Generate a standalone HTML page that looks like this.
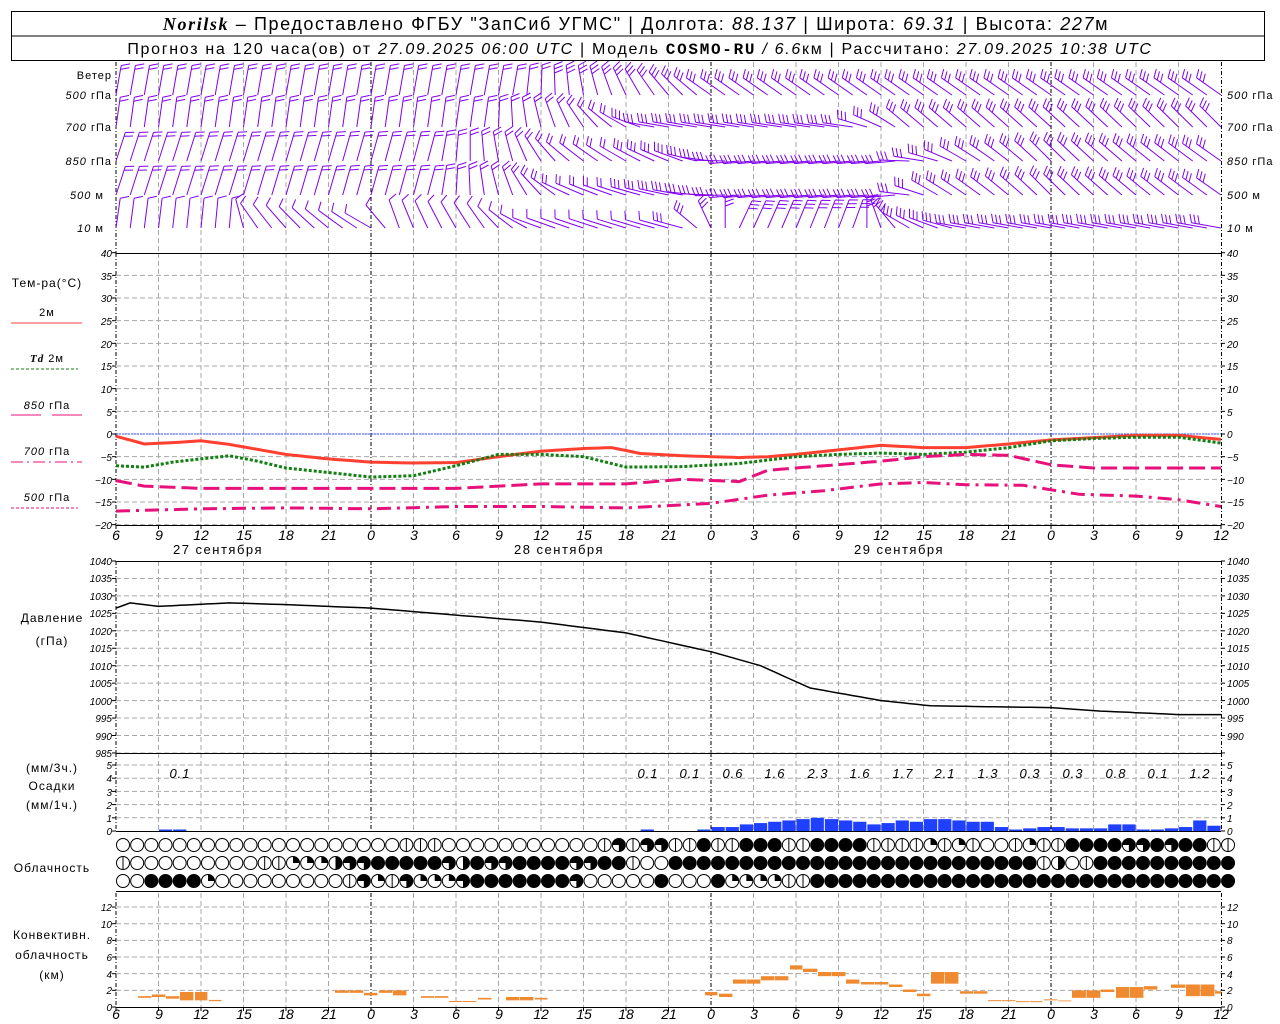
<!DOCTYPE html>
<html><head><meta charset="utf-8">
<style>
html,body{margin:0;padding:0;background:#fff;}
svg{display:block;}
text{font-family:"Liberation Sans",sans-serif;fill:#000;}
.t{font-size:10px;font-style:italic;}
.ax{font-size:14px;font-style:italic;}
.lb{font-size:12px;letter-spacing:1px;}
</style></head><body>
<svg id="s" width="1280" height="1024" viewBox="0 0 1280 1024" xmlns="http://www.w3.org/2000/svg">
<rect x="0" y="0" width="1280" height="1024" fill="#fff"/>
<g id="g"></g>
<!-- header -->
<rect x="11.5" y="11.5" width="1253" height="49" fill="none" stroke="#000"/>
<line x1="11" y1="36" x2="1265" y2="36" stroke="#000"/>
<text x="636" y="30" text-anchor="middle" style="font-size:18px;letter-spacing:1.6px">
<tspan style="font-family:'Liberation Serif',serif;font-style:italic;font-weight:bold">Norilsk</tspan> – Предоставлено ФГБУ "ЗапСиб УГМС" | Долгота: <tspan font-style="italic">88.137</tspan> | Широта: <tspan font-style="italic">69.31</tspan> | Высота: <tspan font-style="italic">227</tspan>м</text>
<text x="640" y="54" text-anchor="middle" style="font-size:16px;letter-spacing:1.7px">Прогноз на 120 часа(ов) от <tspan font-style="italic">27.09.2025 06:00 UTC</tspan>  | Модель <tspan style="font-family:'Liberation Mono',monospace;font-weight:bold">COSMO-RU</tspan> <tspan font-style="italic">/ 6.6</tspan>км | Рассчитано: <tspan font-style="italic">27.09.2025 10:38 UTC</tspan></text>

<!-- wind labels -->
<g class="lb" text-anchor="end" style="font-size:11px">
<text x="112" y="79">Ветер</text>
<text x="112" y="99"><tspan font-style="italic">500</tspan> гПа</text>
<text x="112" y="131"><tspan font-style="italic">700</tspan> гПа</text>
<text x="112" y="165"><tspan font-style="italic">850</tspan> гПа</text>
<text x="104" y="199"><tspan font-style="italic">500</tspan> м</text>
<text x="104" y="232"><tspan font-style="italic">10</tspan>  м</text>
</g>
<g style="font-size:11px;letter-spacing:1px">
<text x="1227" y="99"><tspan font-style="italic">500</tspan> гПа</text>
<text x="1227" y="131"><tspan font-style="italic">700</tspan> гПа</text>
<text x="1227" y="165"><tspan font-style="italic">850</tspan> гПа</text>
<text x="1227" y="199"><tspan font-style="italic">500</tspan> м</text>
<text x="1227" y="232"><tspan font-style="italic">10</tspan>   м</text>
</g>

<!-- temp legend -->
<g class="lb" text-anchor="middle">
<text x="47" y="287">Тем-ра(°C)</text>
<text x="47" y="316" style="font-size:11px">2м</text>
<text x="47" y="362" style="font-size:11px"><tspan style="font-family:'Liberation Serif',serif;font-style:italic;font-weight:bold">Td</tspan>  2м</text>
<text x="47" y="409" style="font-size:11px"><tspan font-style="italic">850</tspan> гПа</text>
<text x="47" y="455" style="font-size:11px"><tspan font-style="italic">700</tspan> гПа</text>
<text x="47" y="501" style="font-size:11px"><tspan font-style="italic">500</tspan> гПа</text>
<text x="52" y="622">Давление</text>
<text x="52" y="645">(гПа)</text>
<text x="52" y="772">(мм/3ч.)</text>
<text x="52" y="790">Осадки</text>
<text x="52" y="809">(мм/1ч.)</text>
<text x="52" y="872">Облачность</text>
<text x="52" y="939">Конвективн.</text>
<text x="52" y="959">облачность</text>
<text x="52" y="979">(км)</text>
</g>
<line x1="11" y1="323" x2="82" y2="323" stroke="#ff4040"/>
<line x1="11" y1="369" x2="78" y2="369" stroke="#108010" stroke-dasharray="3,2"/>
<line x1="11" y1="415" x2="41" y2="415" stroke="#e8107a"/><line x1="52" y1="415" x2="82" y2="415" stroke="#e8107a"/>
<line x1="11" y1="462" x2="82" y2="462" stroke="#e8107a" stroke-dasharray="12,4,2,4"/>
<line x1="11" y1="508" x2="78" y2="508" stroke="#e8107a" stroke-dasharray="3,2"/>

<!-- temp axis labels -->
<g class="t" text-anchor="end">
<text x="112" y="257">40</text><text x="112" y="280">35</text><text x="112" y="302">30</text><text x="112" y="325">25</text><text x="112" y="348">20</text><text x="112" y="370">15</text><text x="112" y="393">10</text><text x="112" y="416">5</text><text x="112" y="438">0</text><text x="112" y="461">−5</text><text x="112" y="484">−10</text><text x="112" y="506">−15</text><text x="112" y="529">−20</text>
</g>
<g class="t">
<text x="1227" y="257">40</text><text x="1227" y="280">35</text><text x="1227" y="302">30</text><text x="1227" y="325">25</text><text x="1227" y="348">20</text><text x="1227" y="370">15</text><text x="1227" y="393">10</text><text x="1227" y="416">5</text><text x="1227" y="438">0</text><text x="1227" y="461">−5</text><text x="1227" y="484">−10</text><text x="1227" y="506">−15</text><text x="1227" y="529">−20</text>
</g>
<!-- pressure labels -->
<g class="t" text-anchor="end">
<text x="112" y="565">1040</text><text x="112" y="582">1035</text><text x="112" y="600">1030</text><text x="112" y="617">1025</text><text x="112" y="635">1020</text><text x="112" y="652">1015</text><text x="112" y="670">1010</text><text x="112" y="687">1005</text><text x="112" y="705">1000</text><text x="112" y="722">995</text><text x="112" y="740">990</text><text x="112" y="757">985</text>
</g>
<g class="t">
<text x="1227" y="565">1040</text><text x="1227" y="582">1035</text><text x="1227" y="600">1030</text><text x="1227" y="617">1025</text><text x="1227" y="635">1020</text><text x="1227" y="652">1015</text><text x="1227" y="670">1010</text><text x="1227" y="687">1005</text><text x="1227" y="705">1000</text><text x="1227" y="722">995</text><text x="1227" y="740">990</text>
</g>
<!-- precip labels -->
<g class="t" text-anchor="end">
<text x="112" y="769">5</text><text x="112" y="782">4</text><text x="112" y="796">3</text><text x="112" y="809">2</text><text x="112" y="822">1</text><text x="112" y="835">0</text>
</g>
<g class="t">
<text x="1227" y="769">5</text><text x="1227" y="782">4</text><text x="1227" y="796">3</text><text x="1227" y="809">2</text><text x="1227" y="822">1</text><text x="1227" y="835">0</text>
</g>
<g style="font-size:13px;font-style:italic;letter-spacing:1px" text-anchor="middle">
<text x="180" y="778">0.1</text><text x="648" y="778">0.1</text><text x="690" y="778">0.1</text><text x="733" y="778">0.6</text><text x="775" y="778">1.6</text><text x="818" y="778">2.3</text><text x="860" y="778">1.6</text><text x="903" y="778">1.7</text><text x="945" y="778">2.1</text><text x="988" y="778">1.3</text><text x="1030" y="778">0.3</text><text x="1073" y="778">0.3</text><text x="1116" y="778">0.8</text><text x="1158" y="778">0.1</text><text x="1200" y="778">1.2</text>
</g>
<!-- convective labels -->
<g class="t" text-anchor="end">
<text x="112" y="911">12</text><text x="112" y="928">10</text><text x="112" y="944">8</text><text x="112" y="961">6</text><text x="112" y="978">4</text><text x="112" y="994">2</text><text x="112" y="1011">0</text>
</g>
<g class="t">
<text x="1227" y="911">12</text><text x="1227" y="928">10</text><text x="1227" y="944">8</text><text x="1227" y="961">6</text><text x="1227" y="978">4</text><text x="1227" y="994">2</text><text x="1227" y="1011">0</text>
</g>
<!-- time axes -->
<g class="ax" text-anchor="middle">
<text x="116" y="540">6</text><text x="159" y="540">9</text><text x="201" y="540">12</text><text x="244" y="540">15</text><text x="286" y="540">18</text><text x="329" y="540">21</text><text x="371" y="540">0</text><text x="414" y="540">3</text><text x="456" y="540">6</text><text x="499" y="540">9</text><text x="541" y="540">12</text><text x="584" y="540">15</text><text x="626" y="540">18</text><text x="669" y="540">21</text><text x="711" y="540">0</text><text x="754" y="540">3</text><text x="796" y="540">6</text><text x="839" y="540">9</text><text x="881" y="540">12</text><text x="924" y="540">15</text><text x="966" y="540">18</text><text x="1009" y="540">21</text><text x="1051" y="540">0</text><text x="1094" y="540">3</text><text x="1136" y="540">6</text><text x="1179" y="540">9</text><text x="1221" y="540">12</text>
</g>
<g class="ax" text-anchor="middle">
<text x="116" y="1019">6</text><text x="159" y="1019">9</text><text x="201" y="1019">12</text><text x="244" y="1019">15</text><text x="286" y="1019">18</text><text x="329" y="1019">21</text><text x="371" y="1019">0</text><text x="414" y="1019">3</text><text x="456" y="1019">6</text><text x="499" y="1019">9</text><text x="541" y="1019">12</text><text x="584" y="1019">15</text><text x="626" y="1019">18</text><text x="669" y="1019">21</text><text x="711" y="1019">0</text><text x="754" y="1019">3</text><text x="796" y="1019">6</text><text x="839" y="1019">9</text><text x="881" y="1019">12</text><text x="924" y="1019">15</text><text x="966" y="1019">18</text><text x="1009" y="1019">21</text><text x="1051" y="1019">0</text><text x="1094" y="1019">3</text><text x="1136" y="1019">6</text><text x="1179" y="1019">9</text><text x="1221" y="1019">12</text>
</g>
<g style="font-size:13px;letter-spacing:1.5px" text-anchor="middle">
<text x="218" y="554">27 сентября</text><text x="559" y="554">28 сентября</text><text x="899" y="554">29 сентября</text>
</g>
</svg>
<script>
(function(){
var NS="http://www.w3.org/2000/svg",G=document.getElementById("g");
function el(n,a){var e=document.createElementNS(NS,n);for(var k in a)e.setAttribute(k,a[k]);G.appendChild(e);return e;}
function X(h){return 116+h*14.167;}
function L(x1,y1,x2,y2,c,w,d){var a={x1:x1,y1:y1,x2:x2,y2:y2,stroke:c,"stroke-width":w||1};if(d)a["stroke-dasharray"]=d;return el("line",a);}
var GR="#a8a8a8",DA="5,3";
function vgrid(y1,y2){for(var h=3;h<78;h+=3){if(h==18||h==42||h==66)L(X(h),y1,X(h),y2,"#000",1,"4,2,1,2");else L(X(h),y1,X(h),y2,GR,1,DA);}
 L(116,y1,116,y2,"#000",1,"4,2,1,2");L(1221.5,y1,1221.5,y2,"#000",1,"4,2,1,2");}
vgrid(62,253);vgrid(253,525);vgrid(561,753);vgrid(753,831);vgrid(893,1007);
for(var t=35;t>=-20;t-=5){var y=434-t*4.533;L(116,y,1221,y,GR,1,DA);}
for(var p=1035;p>=985;p-=5){var y=561+(1040-p)*3.49;L(116,y,1221,y,GR,1,DA);}
for(var v=1;v<=5;v++){var y=831-v*13.2;L(116,y,1221,y,GR,1,DA);}
for(var k=2;k<=12;k+=2){var y=1007-k*8.33;L(116,y,1221,y,GR,1,DA);}
function ticks(ys){ys.forEach(function(y){L(112,y,116,y,"#000");L(1221,y,1225,y,"#000");});}
var a=[];for(var t=40;t>=-20;t-=5)a.push(434-t*4.533);ticks(a);
a=[];for(var p=1040;p>=985;p-=5)a.push(561+(1040-p)*3.49);ticks(a);
a=[];for(var v=0;v<=5;v++)a.push(831-v*13.2);ticks(a);
a=[];for(var k=0;k<=12;k+=2)a.push(1007-k*8.33);ticks(a);
for(var h=0;h<=78;h+=3){L(X(h),525,X(h),529,"#000");L(X(h),1007,X(h),1011,"#000");}
L(116,253.5,1221,253.5,"#000");L(116,525.5,1221,525.5,"#000");
L(116,561.5,1221,561.5,"#000");L(116,753.5,1221,753.5,"#000");
L(116,831.5,1221,831.5,"#000");L(116,891.5,1221,891.5,"#000");L(116,1007.5,1221,1007.5,"#000");
L(116,434,1221,434,"#3050ff",1,"2,1");
function interp(pts,h){for(var i=0;i<pts.length-1;i++){if(h>=pts[i][0]&&h<=pts[i+1][0]){var f=(h-pts[i][0])/(pts[i+1][0]-pts[i][0]);return pts[i][1]+f*(pts[i+1][1]-pts[i][1]);}}return pts[pts.length-1][1];}
function series(pts,fy,c,w,d){var s="";for(var h=0;h<=78;h+=0.5){s+=X(h).toFixed(1)+","+fy(interp(pts,h)).toFixed(1)+" ";}var o={points:s,fill:"none",stroke:c,"stroke-width":w};if(d)o["stroke-dasharray"]=d;el("polyline",o);}
var TY=function(t){return 434-t*4.533;};
series([[0,-0.5],[2,-2.2],[4,-1.9],[6,-1.5],[8,-2.3],[12,-4.5],[15,-5.5],[18,-6.2],[21,-6.4],[24,-6.3],[27,-5],[30,-3.8],[33,-3.2],[35,-3],[37,-4.3],[40,-4.8],[44,-5.2],[46,-5],[48,-4.5],[51,-3.5],[54,-2.5],[57,-3],[60,-3],[63,-2.2],[66,-1.3],[69,-0.8],[72,-0.3],[75,-0.3],[78,-1.2]],TY,"#ff4030",3);
series([[0,-7],[2,-7.3],[4,-6.2],[6,-5.5],[8,-4.8],[10,-6],[12,-7.5],[15,-8.5],[18,-9.5],[21,-9.2],[24,-7],[27,-4.5],[30,-4.5],[33,-5],[36,-7.3],[40,-7.2],[44,-6.5],[48,-5],[51,-4.5],[54,-4.2],[57,-4.5],[60,-4],[63,-3],[66,-1.5],[69,-1],[72,-0.7],[75,-0.7],[78,-2]],TY,"#108010",3,"3,2");
series([[0,-10.3],[2,-11.5],[6,-12],[12,-12],[24,-12],[30,-11],[36,-11],[40,-10],[44,-10.5],[46,-8],[50,-7],[54,-6],[57,-5],[60,-4.5],[63,-4.7],[66,-6.8],[69,-7.5],[72,-7.5],[75,-7.5],[78,-7.5]],TY,"#e8107a",3,"16,6");
series([[0,-17],[6,-16.5],[12,-16.3],[18,-16.5],[24,-16],[30,-16],[36,-16.3],[42,-15.3],[46,-13.5],[50,-12.5],[54,-11],[57,-10.7],[60,-11.2],[64,-11.3],[68,-13.3],[72,-13.7],[75,-14.5],[78,-16]],TY,"#e8107a",3,"14,6,3,6");
var PY=function(p){return 561+(1040-p)*3.49;};
series([[0,1026.5],[1,1028],[3,1027],[8,1028],[12,1027.5],[18,1026.5],[24,1024.5],[30,1022.5],[36,1019.4],[42,1014],[45.5,1010],[49,1003.6],[54,1000],[57.5,998.5],[66,998],[69.5,997],[75,996],[78,996]],PY,"#000",1.5);
var pr={3:0.05,4:0.05,37:0.1,41:0.1,42:0.3,43:0.3,44:0.5,45:0.6,46:0.7,47:0.8,48:0.9,49:1.0,50:0.9,51:0.8,52:0.7,53:0.5,54:0.6,55:0.8,56:0.7,57:0.9,58:0.9,59:0.8,60:0.7,61:0.7,62:0.3,63:0.1,64:0.2,65:0.3,66:0.3,67:0.2,68:0.2,69:0.2,70:0.5,71:0.5,72:0.1,73:0.1,74:0.2,75:0.3,76:0.8,77:0.4};
for(var h in pr){var v=pr[h],hh=+h,hgt=Math.max(1.5,v*13.2);el("rect",{x:X(hh)+0.5,y:831-hgt,width:13.2,height:hgt,fill:"#2040ff"});}
var rows=["0000000000000000000011100000000000141441151155511555511112121001211555544545511",
"1000000000112223445555543544555544551005555555555555555555555555513015555555555",
"0055552000000000142142224555555540000050005222211555555555555555555555555555555"];
var ry=[845,863,881];
rows.forEach(function(r,i){var cy=ry[i];for(var h=0;h<79;h++){var cx=X(h)+7,c=r.charAt(h),R=6.5;
 el("circle",{cx:cx,cy:cy,r:R,fill:c=="5"?"#000":"#fff",stroke:"#000","stroke-width":1});
 if(c=="1")L(cx,cy-R,cx,cy+R,"#000");
 else if(c=="2")el("path",{d:"M"+cx+","+cy+"V"+(cy-R)+"A"+R+","+R+" 0 0 1 "+(cx+R)+","+cy+"Z",fill:"#000"});
 else if(c=="3")el("path",{d:"M"+cx+","+(cy-R)+"A"+R+","+R+" 0 0 1 "+cx+","+(cy+R)+"Z",fill:"#000"});
 else if(c=="4")el("path",{d:"M"+cx+","+cy+"H"+(cx-R)+"A"+R+","+R+" 0 1 1 "+cx+","+(cy+R)+"Z",fill:"#000"});
}});
var cb=[[138,152,1.1,1.3],[152,166,1.2,1.5],[166,180,1.0,1.3],[180,194,0.8,1.8],[195,208,0.8,1.8],[209,222,0.7,0.85],[335,364,1.7,2.0],[364,378,1.4,1.7],[379,393,1.7,2.0],[393,407,1.4,2.0],[421,449,1.1,1.3],[449,463,0.6,0.72],[463,477,0.6,0.72],[478,492,0.9,1.1],[506,534,0.8,1.2],[535,548,0.9,1.1],
[705,718,1.4,1.8],[719,733,1.2,1.6],[733,761,2.8,3.3],[761,789,3.2,3.7],[790,803,4.5,5.0],[803,818,4.2,4.6],[818,846,3.7,4.2],[846,860,2.8,3.3],[861,889,2.7,3.0],[889,903,2.4,2.7],[903,917,1.8,2.1],[917,931,1.3,1.6],[931,959,2.8,4.2],[960,988,1.6,1.9],[988,1016,0.7,0.82],[1016,1043,0.58,0.7],[1044,1058,0.8,0.92],[1058,1072,0.68,0.78],[1072,1101,1.1,2.0],[1101,1115,1.8,2.1],[1116,1144,1.1,2.4],[1144,1158,2.1,2.5],[1171,1186,2.3,2.7],[1186,1215,1.3,2.7],[1215,1222,1.6,1.9]];
cb.forEach(function(b){var n=Math.max(1,Math.round((b[1]-b[0])/14));for(var i=0;i<n;i++){var w=(b[1]-b[0])/n;el("rect",{x:b[0]+i*w,y:1007-b[3]*8.33,width:w-0.6,height:(b[3]-b[2])*8.33,fill:"#f08a30"});}});
var WC="#8000f0";
function ang(row,h){
 var p;
 if(row==0)p=[[0,-10],[28,-10],[33,10],[38,35],[42,55],[78,55]];
 else if(row==1)p=[[0,-8],[26,-8],[32,25],[36,60],[38,80],[52,82],[56,50],[78,45]];
 else if(row==2)p=[[0,-18],[22,-15],[28,15],[32,50],[40,70],[44,95],[55,95],[60,60],[66,45],[78,55]];
 else if(row==3)p=[[0,-18],[22,-15],[28,20],[32,65],[40,80],[44,95],[55,95],[58,60],[66,45],[78,55]];
 else p=[[0,-8],[8,-5],[10,35],[18,60],[20,20],[26,35],[30,70],[40,75],[44,-25],[52,-20],[56,60],[60,80],[78,80]];
 return interp(p,h);}
var by=[95,127,161,195,228];
for(var r=0;r<5;r++){for(var h=0;h<=78;h++){
 var a=ang(r,h)*Math.PI/180,Ls=30,x0=X(h),y0=by[r];
 var dx=-Math.sin(a),dy=-Math.cos(a);
 var x1=x0+dx*Ls,y1=y0+dy*Ls;
 var s="M"+x0.toFixed(1)+","+y0+"L"+x1.toFixed(1)+","+y1.toFixed(1);
 var fx=-dy,fy=dx;
 var fb=0.35;var ux=fx*Math.cos(fb)+dx*Math.sin(fb),uy=fy*Math.cos(fb)+dy*Math.sin(fb);
 var nf=(r==0&&h>30)||(r>=1&&h>36)?3:2;if(r==4&&h<40)nf=1;
 for(var k=0;k<nf;k++){var px=x1-dx*k*4,py=y1-dy*k*4;s+="M"+px.toFixed(1)+","+py.toFixed(1)+"l"+(ux*9).toFixed(1)+","+(uy*9).toFixed(1);}
 el("path",{d:s,fill:"none",stroke:WC,"stroke-width":1});
}}
})();
</script>
</body></html>
